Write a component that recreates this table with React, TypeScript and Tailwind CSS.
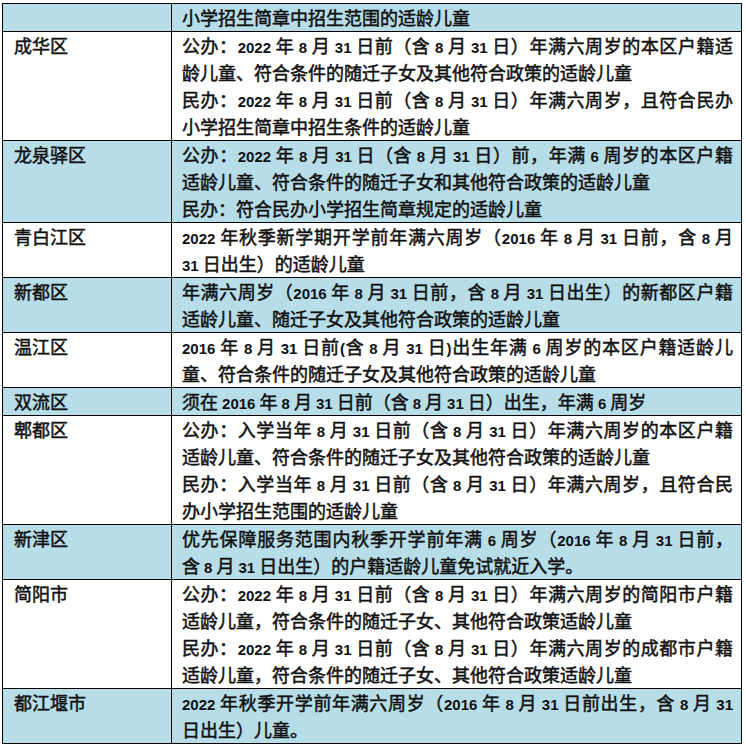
import React from "react";

type Line = { t: string; j?: boolean };
type Row = { name: string; blue: boolean; lines: Line[] };

const rows: Row[] = [
  { name: "", blue: true, lines: [{ t: "小学招生简章中招生范围的适龄儿童" }] },
  {
    name: "成华区",
    blue: false,
    lines: [
      { t: "公办：2022 年 8 月 31 日前（含 8 月 31 日）年满六周岁的本区户籍适", j: true },
      { t: "龄儿童、符合条件的随迁子女及其他符合政策的适龄儿童" },
      { t: "民办：2022 年 8 月 31 日前（含 8 月 31 日）年满六周岁，且符合民办", j: true },
      { t: "小学招生简章中招生条件的适龄儿童" },
    ],
  },
  {
    name: "龙泉驿区",
    blue: true,
    lines: [
      { t: "公办：2022 年 8 月 31 日（含 8 月 31 日）前，年满 6 周岁的本区户籍", j: true },
      { t: "适龄儿童、符合条件的随迁子女和其他符合政策的适龄儿童" },
      { t: "民办：符合民办小学招生简章规定的适龄儿童" },
    ],
  },
  {
    name: "青白江区",
    blue: false,
    lines: [
      { t: "2022 年秋季新学期开学前年满六周岁（2016 年 8 月 31 日前，含 8 月", j: true },
      { t: "31 日出生）的适龄儿童" },
    ],
  },
  {
    name: "新都区",
    blue: true,
    lines: [
      { t: "年满六周岁（2016 年 8 月 31 日前，含 8 月 31 日出生）的新都区户籍", j: true },
      { t: "适龄儿童、随迁子女及其他符合政策的适龄儿童" },
    ],
  },
  {
    name: "温江区",
    blue: false,
    lines: [
      { t: "2016 年 8 月 31 日前(含 8 月 31 日)出生年满 6 周岁的本区户籍适龄儿", j: true },
      { t: "童、符合条件的随迁子女及其他符合政策的适龄儿童" },
    ],
  },
  {
    name: "双流区",
    blue: true,
    lines: [{ t: "须在 2016 年 8 月 31 日前（含 8 月 31 日）出生，年满 6 周岁" }],
  },
  {
    name: "郫都区",
    blue: false,
    lines: [
      { t: "公办：入学当年 8 月 31 日前（含 8 月 31 日）年满六周岁的本区户籍", j: true },
      { t: "适龄儿童、符合条件的随迁子女及其他符合政策的适龄儿童" },
      { t: "民办：入学当年 8 月 31 日前（含 8 月 31 日）年满六周岁，且符合民", j: true },
      { t: "办小学招生范围的适龄儿童" },
    ],
  },
  {
    name: "新津区",
    blue: true,
    lines: [
      { t: "优先保障服务范围内秋季开学前年满 6 周岁（2016 年 8 月 31 日前，", j: true },
      { t: "含 8 月 31 日出生）的户籍适龄儿童免试就近入学。" },
    ],
  },
  {
    name: "简阳市",
    blue: false,
    lines: [
      { t: "公办：2022 年 8 月 31 日前（含 8 月 31 日）年满六周岁的简阳市户籍", j: true },
      { t: "适龄儿童，符合条件的随迁子女、其他符合政策适龄儿童" },
      { t: "民办：2022 年 8 月 31 日前（含 8 月 31 日）年满六周岁的成都市户籍", j: true },
      { t: "适龄儿童，符合条件的随迁子女、其他符合政策适龄儿童" },
    ],
  },
  {
    name: "都江堰市",
    blue: true,
    lines: [
      { t: "2022 年秋季开学前年满六周岁（2016 年 8 月 31 日前出生，含 8 月 31", j: true },
      { t: "日出生）儿童。" },
    ],
  },
];

function seg(t: string) {
  return t.split(/([0-9()]+)/).map((p, i) =>
    /^[0-9()]+$/.test(p) ? (
      <span key={i} className="font-['Liberation_Sans',sans-serif] font-bold text-[15px] leading-none [-webkit-text-stroke:0px]">
        {p}
      </span>
    ) : (
      <span key={i}>{p}</span>
    )
  );
}

export default function App() {
  return (
    <div className="w-[746px] h-[746px] bg-white overflow-hidden pt-[3px] pl-[2px] text-[#111] font-['Noto_Sans_CJK_SC',sans-serif] text-[18px] font-normal leading-[27px] [-webkit-text-stroke:0.5px_#111]">
      <div className="w-[740px] grid grid-cols-[169px_1fr] border-l border-t border-black">
        {rows.map((r, ri) => (
          <React.Fragment key={ri}>
            <div
              className={
                (r.blue ? "bg-[#b7dde8] " : "bg-white ") +
                "border-r border-b border-black pl-[11px]"
              }
            >
              <div className="h-[27px]">{r.name}</div>
            </div>
            <div
              className={
                (r.blue ? "bg-[#b7dde8] " : "bg-white ") +
                "border-r border-b border-black pl-[10px] pr-[8px]"
              }
            >
              {r.lines.map((l, li) => (
                <div
                  key={li}
                  className={
                    "h-[27px] " +
                    (l.j ? "text-justify [text-align-last:justify]" : "text-left")
                  }
                >
                  {seg(l.t)}
                </div>
              ))}
            </div>
          </React.Fragment>
        ))}
      </div>
    </div>
  );
}
